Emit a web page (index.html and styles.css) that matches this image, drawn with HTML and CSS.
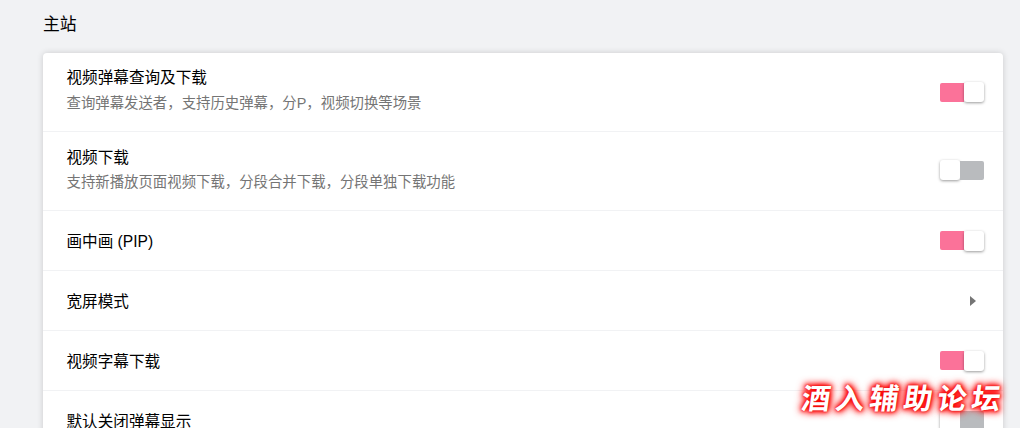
FILE: index.html
```html
<!DOCTYPE html>
<html lang="zh-CN">
<head>
<meta charset="utf-8">
<title>主站</title>
<link rel="stylesheet" href="styles.css">
</head>
<body>
<main class="page">
  <h2 class="section-title">主站</h2>
  <section class="card">
    <div class="row row-tall">
      <div class="info">
        <div class="name">视频弹幕查询及下载</div>
        <div class="desc">查询弹幕发送者，支持历史弹幕，分P，视频切换等场景</div>
      </div>
      <span class="toggle on"><span class="track"></span><span class="knob"></span></span>
    </div>
    <div class="row row-tall row-second">
      <div class="info">
        <div class="name">视频下载</div>
        <div class="desc">支持新播放页面视频下载，分段合并下载，分段单独下载功能</div>
      </div>
      <span class="toggle off"><span class="knob"></span><span class="track"></span></span>
    </div>
    <div class="row">
      <div class="info"><div class="name">画中画 (PIP)</div></div>
      <span class="toggle on"><span class="track"></span><span class="knob"></span></span>
    </div>
    <div class="row">
      <div class="info"><div class="name">宽屏模式</div></div>
      <svg class="arrow" width="8" height="12" viewBox="0 0 8 12"><path d="M1 1 L7 6 L1 11 Z" fill="#757575"/></svg>
    </div>
    <div class="row">
      <div class="info"><div class="name">视频字幕下载</div></div>
      <span class="toggle on"><span class="track"></span><span class="knob"></span></span>
    </div>
    <div class="row">
      <div class="info"><div class="name">默认关闭弹幕显示</div></div>
      <span class="toggle off"><span class="knob"></span><span class="track"></span></span>
    </div>
  </section>
</main>
<div class="watermark">酒入辅助论坛</div>
</body>
</html>
```
FILE: styles.css
```css
* { box-sizing: border-box; }
html, body { height: 100%; }
body {
  margin: 0;
  height: 428px;
  overflow: hidden;
  background: #f1f2f4;
  color: #000;
  font-family: "Liberation Sans", "Noto Sans CJK SC", sans-serif;
  position: relative;
}
.page { padding: 0 17px 0 43px; }
.section-title {
  margin: 0;
  height: 53px;
  padding-top: 12px;
  font-size: 16.8px;
  line-height: 26px;
  font-weight: 400;
}
.card {
  background: #fff;
  border-radius: 4px;
  box-shadow: 0 0 6px rgba(0, 0, 0, 0.16);
}
.row {
  display: flex;
  align-items: center;
  justify-content: space-between;
  height: 60px;
  padding: 0 19.5px 0 23.5px;
  border-bottom: 1px solid #f1f2f4;
}
.row > .info { padding-top: 2px; }
.row-tall { height: 79px; }
.row-tall > .info { padding: 0 0 4px; }
.row-second { padding-bottom: 2px; }
.row-second > .info { padding: 0 0 2px; }
.name { font-size: 15.6px; line-height: 22px; }
.desc { font-size: 14.4px; line-height: 20px; margin-top: 4px; color: #757575; }
.row-second .desc { margin-top: 3px; }
.toggle {
  display: flex;
  align-items: center;
  width: 44px;
  height: 20px;
}
.track {
  flex: 1;
  height: 19px;
  border-radius: 2px 0 0 2px;
}
.on .track { background: #fb7299; }
.off .track { background: #b9bbbe; border-radius: 0 2px 2px 0; }
.knob {
  width: 20px;
  height: 20px;
  background: #fff;
  border-radius: 3px;
  box-shadow: 0 1px 3px rgba(0, 0, 0, 0.4);
}
.arrow { margin-right: 6.5px; }
.watermark {
  position: absolute;
  left: 802px;
  top: 378px;
  font-family: "Noto Sans CJK SC", sans-serif;
  font-size: 29px;
  font-weight: 700;
  line-height: 36px;
  letter-spacing: 5px;
  white-space: nowrap;
  color: #fff;
  text-shadow:
    0 0 2px #e01010, 0 0 4px #f00, 0 0 6px #f00, 0 0 8px #f00, 0 0 10px #f44;
  transform: skewX(-8deg);
}
```
